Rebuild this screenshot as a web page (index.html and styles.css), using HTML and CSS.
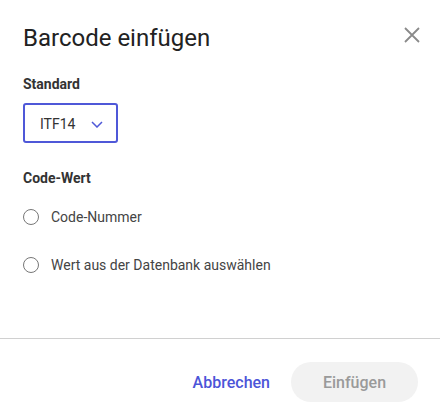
FILE: index.html
```html
<!DOCTYPE html>
<html lang="de">
<head>
    <meta charset="UTF-8">
    <meta name="viewport" content="width=device-width, initial-scale=1.0">
    <title>Barcode einfügen</title>
    <link rel="stylesheet" href="styles.css">
</head>
<body>
    <div class="dialog">
        <div class="dialog-body">
            <div class="dialog-header">
                <h1 class="dialog-title">Barcode einfügen</h1>
                <button class="close-btn" aria-label="Schließen">
                    <svg width="16" height="16" viewBox="0 0 16 16">
                        <path d="M1 1L15 15M15 1L1 15" stroke="#8a8a8a" stroke-width="1.8" fill="none"/>
                    </svg>
                </button>
            </div>

            <div class="field-label">Standard</div>
            <div class="select-box">
                <span class="select-value">ITF14</span>
                <svg class="chevron" width="12" height="7" viewBox="0 0 12 7">
                    <path d="M1 1L6 6L11 1" stroke="#4f58d8" stroke-width="1.5" fill="none"/>
                </svg>
            </div>

            <div class="field-label field-label-second">Code-Wert</div>
            <div class="radio-list">
                <label class="radio-row">
                    <span class="radio"></span>
                    <span class="radio-text">Code-Nummer</span>
                </label>
                <label class="radio-row">
                    <span class="radio"></span>
                    <span class="radio-text">Wert aus der Datenbank auswählen</span>
                </label>
            </div>
        </div>

        <div class="dialog-footer">
            <button class="btn-text">Abbrechen</button>
            <button class="btn-primary" disabled>Einfügen</button>
        </div>
    </div>
</body>
</html>
```

FILE: styles.css
```css
html, body {
    margin: 0;
    padding: 0;
    height: 100%;
}

body {
    font-family: Roboto, "Liberation Sans", Arial, sans-serif;
    background: #fff;
    color: #333;
}

.dialog {
    display: flex;
    flex-direction: column;
    height: 100vh;
    box-sizing: border-box;
}

.dialog-body {
    flex: 1;
    padding: 24px 20px 0 23px;
}

.dialog-header {
    display: flex;
    justify-content: space-between;
    align-items: flex-start;
}

.dialog-title {
    margin: 0;
    font-size: 24px;
    line-height: 28px;
    font-weight: 400;
    color: #222;
}

.close-btn {
    border: none;
    background: none;
    padding: 0;
    margin-top: 3px;
    width: 16px;
    height: 16px;
    cursor: pointer;
}

.close-btn svg {
    display: block;
}

.field-label {
    margin-top: 22px;
    font-size: 14px;
    line-height: 20px;
    font-weight: 700;
    color: #333;
}

.field-label-second {
    margin-top: 25px;
}

.select-box {
    margin-top: 9px;
    width: 95px;
    height: 40px;
    box-sizing: border-box;
    border: 2px solid #4f58d8;
    border-radius: 3px;
    padding: 2px 13px 0 15px;
    display: flex;
    align-items: center;
    justify-content: space-between;
}

.select-value {
    font-size: 14px;
    line-height: 20px;
    color: #333;
}

.chevron {
    display: block;
    margin-top: 1px;
}

.radio-list {
    margin-top: 5px;
}

.radio-row {
    display: flex;
    align-items: center;
    height: 48px;
    cursor: pointer;
}

.radio {
    width: 16px;
    height: 16px;
    box-sizing: border-box;
    border: 1.5px solid #777;
    border-radius: 50%;
    margin-right: 12px;
}

.radio-text {
    font-size: 14px;
    line-height: 20px;
    color: #444;
}

.dialog-footer {
    border-top: 1px solid #d0d0d0;
    padding: 23px 22px 18px 23px;
    display: flex;
    justify-content: flex-end;
    align-items: center;
}

.btn-text {
    border: none;
    background: none;
    padding: 0;
    margin-right: 21px;
    font-family: inherit;
    font-size: 16px;
    font-weight: 500;
    color: #4c55d8;
    cursor: pointer;
}

.btn-primary {
    border: none;
    width: 127px;
    height: 40px;
    border-radius: 20px;
    background: #f2f2f2;
    font-family: inherit;
    font-size: 16px;
    font-weight: 500;
    color: #9a9a9a;
}
```
